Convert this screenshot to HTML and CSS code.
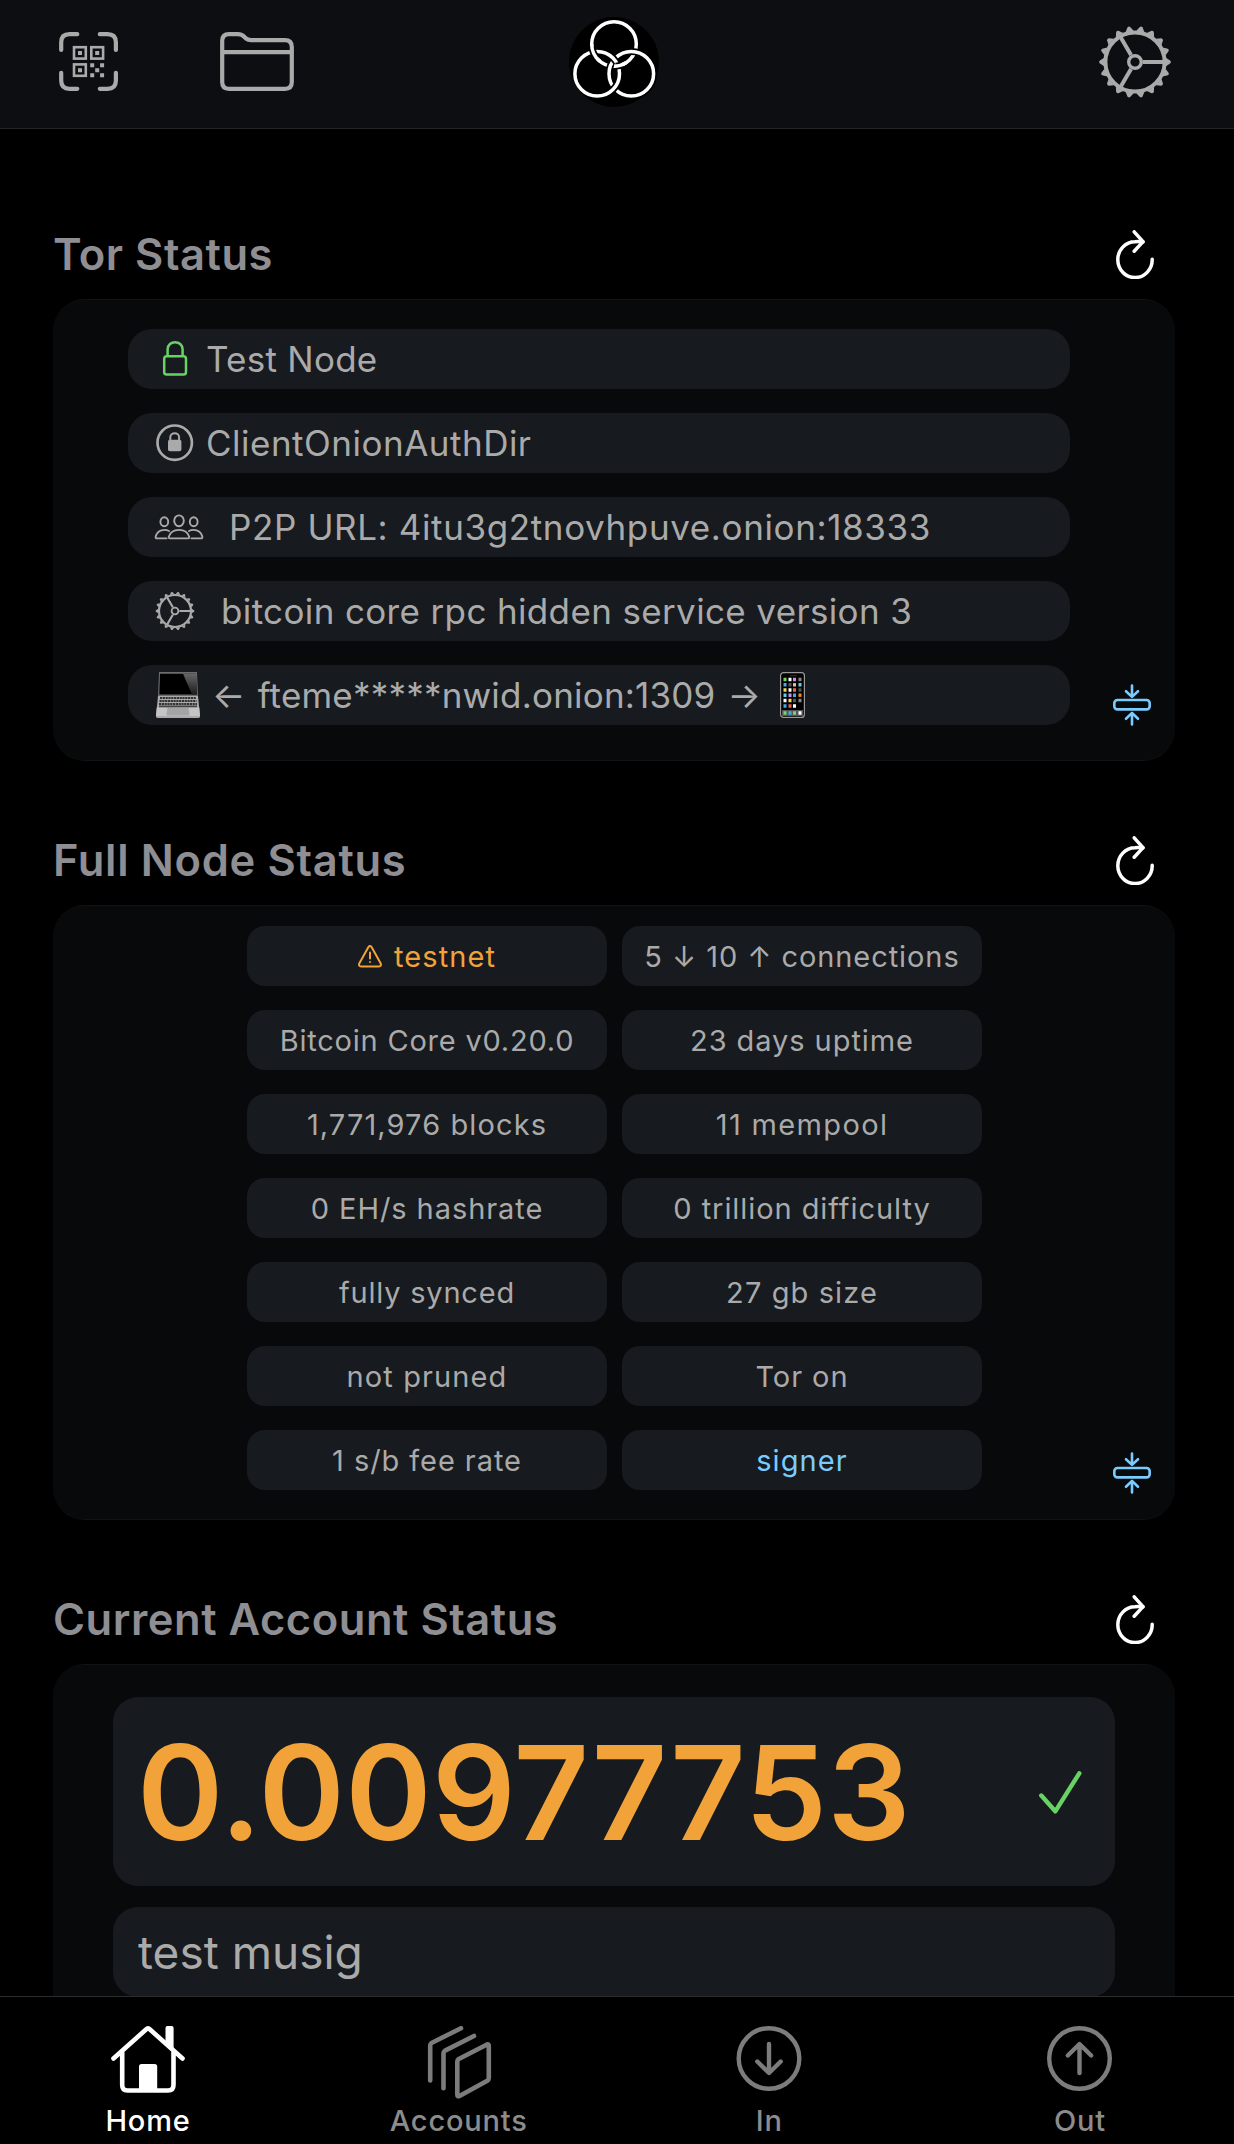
FILE: index.html
```html
<!DOCTYPE html>
<html lang="en">
<head>
<meta charset="utf-8">
<title>Home</title>
<link rel="stylesheet" href="styles.css">
</head>
<body>
<svg class="defs" width="0" height="0" aria-hidden="true">
  <symbol id="gear" viewBox="-37 -37 74 74">
    <defs>
      <g id="teeth">
        <path id="tooth" d="M31-4.2 35.4-1.3Q36.4 0 35.4 1.3L31 4.2Z" fill="currentColor"/>
        <use href="#tooth" transform="rotate(20)"/>
        <use href="#tooth" transform="rotate(40)"/>
      </g>
    </defs>
    <use href="#teeth"/><use href="#teeth" transform="rotate(60)"/><use href="#teeth" transform="rotate(120)"/>
    <use href="#teeth" transform="rotate(180)"/><use href="#teeth" transform="rotate(240)"/><use href="#teeth" transform="rotate(300)"/>
    <g fill="none" stroke="currentColor" stroke-width="4">
      <circle r="29.6"/><circle r="6.3" stroke-width="3.4"/>
      <path d="M8 0H29M-4-6.9-14.5-25.1M-4 6.9-14.5 25.1"/>
    </g>
  </symbol>
  <symbol id="refresh" viewBox="0 0 38 49">
    <g fill="none" stroke="#fff" stroke-width="3.5" stroke-linecap="round" stroke-linejoin="round">
      <path d="M36.2 29.3A17.2 17.9 0 1 1 19 11.8Q22.5 11.3 27 12"/>
      <path d="M18.2 1.8 27 11.6 18.2 21.2"/>
    </g>
  </symbol>
  <symbol id="compress" viewBox="0 0 38 42">
    <g fill="none" stroke="#7accff" stroke-width="2.6" stroke-linecap="round" stroke-linejoin="round">
      <rect x="1.3" y="16" width="35.4" height="9.4" rx="3.2"/>
      <path d="M19 1.6V12.4M13 7.2 19 12.9 25 7.2M19 40.4V29.2M13 34.8 19 28.9 25 34.8"/>
    </g>
  </symbol>
</svg>

<header class="topbar">
  <div class="topbar-left">
    <svg class="qr" viewBox="59 32 59 59">
      <g fill="none" stroke="#aaa" stroke-width="4.2" stroke-linecap="round">
        <path d="M61.2 50V42.5Q61.2 34.2 69.5 34.2H77.3M99.8 34.2H107.5Q115.9 34.2 115.9 42.5V50M115.9 72.8V80.5Q115.9 88.8 107.5 88.8H99.8M77.3 88.8H69.5Q61.2 88.8 61.2 80.5V72.8"/>
      </g>
      <g fill="none" stroke="#aaa" stroke-width="2.6">
        <rect x="74" y="47.2" width="11.8" height="11.4"/><rect x="91.3" y="47.2" width="11.8" height="11.4"/><rect x="74" y="64.4" width="11.8" height="11.4"/>
      </g>
      <path fill="#aaa" d="M78 51h4v4h-4zM95.2 51h4v4h-4zM78 68.2h4v4h-4zM90.2 63.2h4v4h-4zM100.1 63.2h4v4h-4zM95.2 68.2h4v4h-4zM90.2 73.2h4v4h-4zM100.1 73.2h4v4h-4z"/>
    </svg>
    <svg class="folder" viewBox="220 32 74 59">
      <path fill="none" stroke="#aaa" stroke-width="4.2" stroke-linejoin="round" d="M222.2 41Q222.2 34.2 229 34.2H238Q242 34.2 244.5 37L246 38.5Q248 40.1 251 40.1H285Q291.8 40.1 291.8 47V82Q291.8 88.8 285 88.8H229Q222.2 88.8 222.2 82ZM222.2 52.1H291.8"/>
    </svg>
  </div>
  <svg class="logo" viewBox="569 17 90 90">
    <circle cx="614" cy="62" r="45" fill="#000"/>
    <g fill="none" stroke="#fff" stroke-width="3.5">
      <circle cx="614" cy="44" r="22.3"/>
      <circle cx="631.3" cy="73.8" r="22.3" stroke="#000" stroke-width="7"/>
      <circle cx="631.3" cy="73.8" r="22.3"/>
      <path stroke="#000" stroke-width="7" d="M610.7 91.6A22.3 22.3 0 0 0 617.8 82.2M618.4 67A22.3 22.3 0 0 0 606 53.3"/>
      <circle cx="597.2" cy="73.8" r="22.3"/>
      <path stroke="#000" stroke-width="7" d="M591.7 46A22.3 22.3 0 0 0 597.2 58.6M615.5 66.2A22.3 22.3 0 0 0 623 64.5"/>
      <path d="M591.7 44A22.3 22.3 0 0 0 600 61.4M614 66.3A22.3 22.3 0 0 0 626 62.8"/>
    </g>
  </svg>
  <svg class="settings"><use href="#gear"/></svg>
</header>

<main>
  <section>
    <div class="heading"><h2>Tor Status</h2><svg class="refresh"><use href="#refresh"/></svg></div>
    <div class="card tor">
      <div class="rows">
        <div class="row name">
          <svg class="icon" viewBox="156 341 38 38"><g fill="none" stroke="#68d265" stroke-width="2.5"><rect x="164.200" y="357.200" width="21.800" height="18.400" rx="2.600"/><path d="M167.600 357V350.500C167.600 340.700 182.600 340.700 182.600 350.500V357"/></g></svg>
          <span>Test Node</span>
        </div>
        <div class="row auth">
          <svg class="icon" viewBox="156 426 38 38"><circle cx="174.700" cy="444.700" r="17.200" fill="none" stroke="#aaa" stroke-width="2.700"/><rect x="168" y="441.800" width="13.400" height="11.400" rx="1.800" fill="#aaa"/><path fill="none" stroke="#aaa" stroke-width="2" d="M170.300 443V439.500C170.300 433.800 179.100 433.800 179.100 439.500V443"/></svg>
          <span>ClientOnionAuthDir</span>
        </div>
        <div class="row p2p">
          <svg class="icon people" viewBox="154 509 50 38"><g fill="none" stroke="#aaa" stroke-width="1.9" stroke-linejoin="round" stroke-linecap="round"><ellipse cx="179" cy="521.800" rx="4.800" ry="5.400"/><ellipse cx="164.300" cy="522.800" rx="3.900" ry="4.500"/><ellipse cx="193.700" cy="522.800" rx="3.900" ry="4.500"/><path d="M170 539.400H188Q189.600 539.400 189.200 537.800C186.500 528.600 171.500 528.600 168.800 537.800Q168.400 539.400 170 539.400Z"/><path d="M166.500 539.400H157Q155.300 539.400 155.700 537.600C157.500 531 164.500 529.600 169 532M191.500 539.400H201Q202.700 539.400 202.300 537.600C200.500 531 193.500 529.600 189 532"/></g></svg>
          <span>P2P URL: 4itu3g2tnovhpuve.onion:18333</span>
        </div>
        <div class="row rpc">
          <svg class="icon cog"><use href="#gear"/></svg>
          <span>bitcoin core rpc hidden service version 3</span>
        </div>
        <div class="row onion">
          <svg class="icon laptop" viewBox="0 0 44 46">
            <defs><linearGradient id="glare" x1="0" y1="0" x2="0" y2="1"><stop offset="0" stop-color="#666"/><stop offset="1" stop-color="#1c1c1c"/></linearGradient></defs>
            <path fill="#6c6c6c" d="M3 0H41L42 24H2Z"/><path fill="#000" d="M4 1.800H40L40.700 22.500H3.300Z"/><path fill="url(#glare)" d="M27 1.800H40L40.700 22.500H36Z"/>
            <path fill="#aaa" d="M2 24H42L44 44.500Q44 46 42 46H2Q0 46 0 44.500Z"/>
            <path fill="#c4c4c4" d="M.7 35.500H43.300L44 44H0Z"/><path fill="#a4a4a4" d="M11.500 35.500H32.500L33.500 43.500H10.500Z"/>
            <path fill="none" stroke="#333" stroke-width="2" stroke-dasharray="2.2 .6" d="M4 26H40M3.500 29H40.500M3 32H41"/><path stroke="#444" stroke-width="1.6" d="M3 34.400H41"/>
          </svg>
          <span>← fteme*****nwid.onion:1309 →</span>
          <svg class="phone" viewBox="0 0 25 46">
            <rect x=".6" y=".6" width="23.800" height="44.800" rx="3" fill="#000" stroke="#999" stroke-width="1.2"/><path stroke="#333" d="M10 3.700H17"/><rect x="2" y="38" width="21" height="6" fill="#555"/>
            <g stroke-width="3.4" fill="none">
              <path stroke="#6fd86a" d="M3.500 7.500h3M3.500 41h3M13 41h3"/><path stroke="#fff" d="M8.500 7.500h3M8.500 18h3M3.500 28.500h3M13 34h3M18.500 41h3"/>
              <path stroke="#d88be8" d="M13 7.500h3M8.500 23.200h3"/><path stroke="#888" d="M18.500 7.500h3M18.500 28.500h3"/><path stroke="#555" d="M8.500 12.800h3M18.500 18h3M13 28.500h3"/>
              <path stroke="#45a9f0" d="M3.500 12.800h3M13 23.200h3M3.500 34h3M8.500 41h3"/><path stroke="#ddc0a0" d="M13 12.800h3"/><path stroke="#62cdf2" d="M18.500 12.800h3M3.500 23.200h3"/>
              <path stroke="#f6dc50" d="M3.500 18h3M8.500 28.500h3"/><path stroke="#f0604a" d="M13 18h3M8.500 34h3"/><path stroke="#f28a20" d="M18.500 23.200h3"/>
            </g>
          </svg>
        </div>
      </div>
      <svg class="compress"><use href="#compress"/></svg>
    </div>
  </section>

  <section>
    <div class="heading"><h2 class="wide">Full Node Status</h2><svg class="refresh"><use href="#refresh"/></svg></div>
    <div class="card node">
      <div class="grid">
        <div class="cell warn"><svg class="triangle" viewBox="0 0 24 23"><path fill="none" stroke="#f1a33a" stroke-width="2" stroke-linejoin="round" d="M10.300 2.200Q12 -.3 13.700 2.200L22.600 18.200Q23.800 21.400 20.800 21.600H3.200Q.2 21.400 1.400 18.200Z"/><path stroke="#f1a33a" stroke-width="2" stroke-linecap="round" d="M12 7.500V13.500M12 17V17.100"/></svg><span>testnet</span></div>
        <div class="cell">5 ↓ 10 ↑ connections</div>
        <div class="cell snug">Bitcoin Core v0.20.0</div>
        <div class="cell">23 days uptime</div>
        <div class="cell loose">1,771,976 blocks</div>
        <div class="cell looser">11 mempool</div>
        <div class="cell">0 EH/s hashrate</div>
        <div class="cell">0 trillion difficulty</div>
        <div class="cell snug">fully synced</div>
        <div class="cell loose">27 gb size</div>
        <div class="cell loose">not pruned</div>
        <div class="cell">Tor on</div>
        <div class="cell">1 s/b fee rate</div>
        <div class="cell loose link">signer</div>
      </div>
      <svg class="compress"><use href="#compress"/></svg>
    </div>
  </section>

  <section>
    <div class="heading"><h2>Current Account Status</h2><svg class="refresh"><use href="#refresh"/></svg></div>
    <div class="card account">
      <div class="balance"><span>0.00977753</span><svg class="check" viewBox="0 0 43 43"><path fill="none" stroke="#68d265" stroke-width="4.4" stroke-linecap="round" stroke-linejoin="round" d="M2.300 24.500 16.300 40.300 40.300 2.300"/></svg></div>
      <div class="label">test musig</div>
    </div>
  </section>
</main>

<nav class="tabs">
  <div class="tab active">
    <svg viewBox="111 2026 74 74"><g fill="none" stroke="#fff" stroke-width="4.6" stroke-linecap="round" stroke-linejoin="round"><path d="M113.500 2058.500 146 2029.500Q148 2027.300 150 2029.500L182.500 2058.500M122.200 2052V2085Q122.200 2090.500 127.500 2090.500H168Q173.500 2090.500 173.500 2085V2052"/></g><path fill="#fff" d="M165.500 2028Q165.500 2026 167.500 2026H171.600Q173.600 2026 173.600 2028V2052L165.500 2045ZM139 2066.500Q139 2064 141.500 2064H154.700Q157.200 2064 157.200 2066.500V2090H139Z"/></svg>
    <span>Home</span>
  </div>
  <div class="tab">
    <svg viewBox="422 2026 74 74"><g fill="none" stroke="#7c7c7c" stroke-width="4.6" stroke-linecap="round" stroke-linejoin="round"><path d="M430.200 2080.500V2045.500Q430.200 2044 431.500 2043L461 2028.200M443.500 2088.300V2053Q443.500 2051.500 445 2050.600L474 2036M457.300 2061.500Q457.300 2060 458.800 2059L487 2044.500Q488.800 2043.800 488.800 2046V2078Q488.800 2079.800 487.300 2080.700L459.500 2096Q457.300 2097 457.300 2094.500Z"/></g></svg>
    <span>Accounts</span>
  </div>
  <div class="tab">
    <svg viewBox="732.500 2026 74 74"><g fill="none" stroke="#7c7c7c" stroke-width="4.4" stroke-linecap="round" stroke-linejoin="round"><circle cx="769.500" cy="2058.500" r="30.300"/><path d="M769.500 2044V2072.500M757.800 2061.500 769.500 2073 781.200 2061.500"/></g></svg>
    <span>In</span>
  </div>
  <div class="tab">
    <svg viewBox="1043 2026 74 74"><g fill="none" stroke="#7c7c7c" stroke-width="4.4" stroke-linecap="round" stroke-linejoin="round"><circle cx="1079.500" cy="2058.500" r="30.300"/><path d="M1079.500 2073V2044.500M1067.800 2055.500 1079.500 2044 1091.200 2055.500"/></g></svg>
    <span>Out</span>
  </div>
</nav>
</body>
</html>
```
FILE: styles.css
```css
* { box-sizing: border-box; }

body {
  margin: 0;
  height: 2144px;
  overflow: hidden;
  display: flex;
  flex-direction: column;
  background: #000;
  color: #aaa;
  font-family: Inter, "Liberation Sans", sans-serif;
  white-space: nowrap;
}

svg { display: block; flex: none; }
.defs { position: absolute; }

.topbar {
  flex: none;
  height: 129px;
  padding: 0 62px 5px 59px;
  display: grid;
  grid-template-columns: 510px 90px 1fr;
  align-items: center;
  background: #0d0e12;
  border-bottom: 1px solid #242528;
}
.topbar-left { display: flex; gap: 102px; }
.qr { width: 59px; height: 59px; }
.folder { width: 74px; height: 59px; }
.logo { width: 90px; height: 90px; }
.settings { width: 74px; height: 74px; justify-self: end; color: #aaa; }

main {
  flex: 1;
  min-height: 0;
  overflow: hidden;
  padding: 95px 59px 0 53px;
  display: flex;
  flex-direction: column;
  gap: 69px;
}
section { flex: none; }

.heading {
  height: 75px;
  display: flex;
  justify-content: space-between;
  align-items: flex-start;
  padding-right: 21px;
}
h2 {
  margin: 0;
  color: #8e8e93;
  font-size: 43.5px;
  line-height: 60px;
  font-weight: 600;
  letter-spacing: 0.52px;
}
h2.wide { letter-spacing: 0.68px; }
.refresh { width: 38px; height: 49px; margin-top: 6px; }

.card {
  display: flex;
  border-radius: 32px;
  background: #08090a;
  border: solid #111213;
  border-width: 1px 0;
}
.tor { height: 462px; padding: 29px 24px 34px 75px; }
.node { height: 615px; padding: 20px 24px 25px 194px; }
.account {
  height: 480px;
  padding: 32px 60px 0;
  flex-direction: column;
  gap: 21px;
}
.compress { width: 38px; height: 42px; align-self: flex-end; margin-left: auto; }

.rows { width: 942px; display: flex; flex-direction: column; gap: 24px; }
.row {
  height: 60px;
  padding-left: 28px;
  display: flex;
  align-items: center;
  border-radius: 24px;
  background: #171a1e;
  font-size: 35px;
}
.name { letter-spacing: 0.25px; }
.auth { letter-spacing: 0.5px; }
.p2p { letter-spacing: 0.62px; }
.rpc { letter-spacing: 0.36px; }
.onion { letter-spacing: 0.2px; word-spacing: 2px; }
.icon { width: 38px; height: 38px; margin-right: 12px; color: #aaa; }
.people { width: 50px; margin: 0 25px 0 -2px; }
.cog { width: 40px; height: 40px; margin: 0 26px 0 -1px; }
.laptop { width: 44px; height: 46px; margin-right: 12px; }
.phone { width: 25px; height: 46px; margin-left: 19px; }

.grid {
  display: grid;
  grid-template-columns: 360px 360px;
  grid-auto-rows: 60px;
  gap: 24px 15px;
}
.cell {
  display: flex;
  justify-content: center;
  align-items: center;
  border-radius: 18px;
  background: #171a1e;
  font-size: 29px;
  letter-spacing: 0.93px;
}
.snug { letter-spacing: 0.78px; }
.loose, .warn { letter-spacing: 1.1px; }
.looser { letter-spacing: 1.35px; }
.warn { color: #f1a33a; gap: 12px; }
.triangle { width: 24px; height: 23px; }
.link { color: #7accff; }

.balance, .label {
  flex: none;
  display: flex;
  align-items: center;
  border-radius: 25px;
  background: #171a1e;
}
.balance {
  height: 189px;
  padding: 2px 33px 0 24px;
  justify-content: space-between;
  color: #f1a33a;
  font-size: 131px;
  font-weight: 600;
  letter-spacing: 0.3px;
}
.check { width: 43px; height: 43px; }
.label { height: 90px; padding-left: 25px; font-size: 46px; }

.tabs {
  flex: none;
  height: 148px;
  padding: 29px 14px 0 8px;
  display: flex;
  justify-content: space-between;
  border-top: 1px solid #2b2c2e;
  color: #8c8c8c;
}
.tab {
  width: 280px;
  display: flex;
  flex-direction: column;
  align-items: center;
  font-size: 29px;
  line-height: 40px;
  font-weight: 500;
  letter-spacing: 0.8px;
}
.tab svg { width: 74px; height: 74px; margin-bottom: 1px; }
.active { color: #fff; }
```
